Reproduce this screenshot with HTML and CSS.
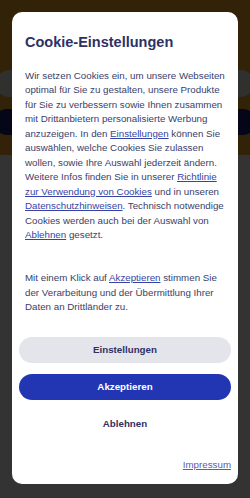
FILE: index.html
```html
<!DOCTYPE html>
<html lang="de">
<head>
<meta charset="utf-8">
<title>Cookie-Einstellungen</title>
<link rel="stylesheet" href="styles.css">
</head>
<body>
<div class="page">
  <header class="header">
    <div class="search"></div>
    <div class="pillbtn"></div>
  </header>
  <main class="content"></main>
</div>
<div class="overlay">
  <section class="modal">
    <h1 class="title">Cookie-Einstellungen</h1>
    <p class="text">Wir setzen Cookies ein, um unsere Webseiten optimal für Sie zu gestalten, unsere Produkte für Sie zu verbessern sowie Ihnen zusammen mit Drittanbietern personalisierte Werbung anzuzeigen. In den <a href="#" class="link">Einstellungen</a> können Sie auswählen, welche Cookies Sie zulassen wollen, sowie Ihre Auswahl jederzeit ändern. Weitere Infos finden Sie in unserer <a href="#" class="link">Richtlinie zur Verwendung von Cookies</a> und in unseren <a href="#" class="link">Datenschutzhinweisen</a>. Technisch notwendige Cookies werden auch bei der Auswahl von <a href="#" class="link">Ablehnen</a> gesetzt.</p>
    <p class="text text-second">Mit einem Klick auf <a href="#" class="link">Akzeptieren</a> stimmen Sie der Verarbeitung und der Übermittlung Ihrer Daten an Drittländer zu.</p>
    <div class="actions">
      <button class="btn btn-secondary">Einstellungen</button>
      <button class="btn btn-primary">Akzeptieren</button>
      <button class="btn btn-ghost">Ablehnen</button>
    </div>
    <div class="footer">
      <a href="#" class="imprint">Impressum</a>
    </div>
  </section>
</div>
</body>
</html>
```

FILE: styles.css
```css
* { box-sizing: border-box; }
html, body { margin: 0; padding: 0; }
body {
  width: 250px;
  height: 498px;
  overflow: hidden;
  font-family: "Liberation Sans", Arial, sans-serif;
  background: #ffffff;
}
.page { display: flex; flex-direction: column; height: 498px; }
.header {
  height: 155px;
  background: #f2a92a;
  display: flex;
  flex-direction: column;
  padding: 70px 0 0 0;
  gap: 12px;
}
.search {
  height: 27px;
  margin: 0 -4px;
  border-radius: 14px;
  background: #f0eeea;
}
.pillbtn {
  height: 26px;
  margin: 0 -6px;
  border-radius: 13px;
  background: #1a237e;
}
.content { flex: 1; background: #ffffff; }
.overlay {
  position: fixed;
  inset: 0;
  background: rgba(0, 0, 0, 0.8);
  padding: 12px 12px 14px 12px;
  display: flex;
}
.modal {
  flex: 1;
  background: #ffffff;
  border-radius: 10px;
  padding: 21px 11px 12px 13px;
  display: flex;
  flex-direction: column;
}
.title {
  margin: 0;
  font-size: 14.5px;
  line-height: 18px;
  font-weight: 700;
  color: #2e3163;
}
.text {
  margin: 18px 0 0 0;
  font-size: 9.75px;
  line-height: 14.45px;
  color: #3b3e69;
}
.text-second { margin-top: 28.9px; }
.link { color: #3744a6; text-decoration: underline; }
.actions {
  display: flex;
  flex-direction: column;
  gap: 11px;
  margin: 22px -4px 0 -6px;
}
.btn {
  height: 26px;
  border: 0;
  border-radius: 13px;
  font-family: "Liberation Sans", Arial, sans-serif;
  font-size: 9.75px;
  font-weight: 700;
  padding: 0;
}
.btn-secondary { background: #e4e5eb; color: #2e3163; }
.btn-primary { background: #2236b4; color: #ffffff; }
.btn-ghost { background: transparent; color: #2e3163; }
.footer {
  margin-top: auto;
  display: flex;
  justify-content: flex-end;
  margin-right: -4px;
}
.imprint {
  font-size: 9.75px;
  line-height: 14px;
  color: #5560b0;
  text-decoration: underline;
}
```
